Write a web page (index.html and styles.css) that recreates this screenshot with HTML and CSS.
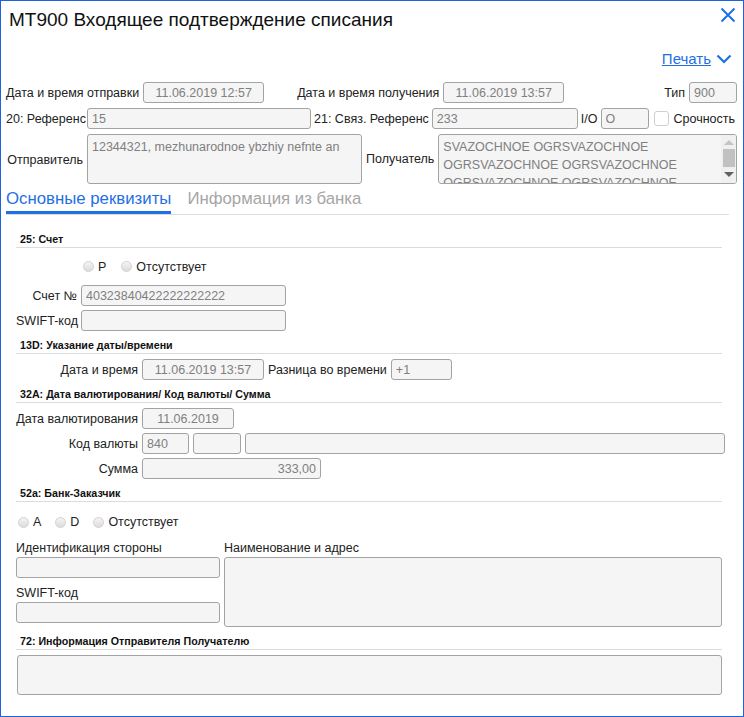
FILE: index.html
```html
<!DOCTYPE html>
<html lang="ru">
<head>
<meta charset="utf-8">
<link rel="stylesheet" href="styles.css">
</head>
<body>
<div class="win">
  <div class="title-bar">
    <h1 class="title">MT900 Входящее подтверждение списания</h1>
    <svg class="close" width="16" height="16" viewBox="0 0 16 16"><path d="M1.5 1.5 L14.5 14.5 M14.5 1.5 L1.5 14.5" stroke="#1f6fe5" stroke-width="2" fill="none"/></svg>
  </div>
  <div class="print-row">
    <a class="print">Печать</a>
    <svg class="chev" width="16" height="10" viewBox="0 0 16 10"><path d="M1.5 1.5 L8 8 L14.5 1.5" stroke="#1f6fe5" stroke-width="2.2" fill="none"/></svg>
  </div>

  <div class="top">
    <div class="row">
      <span class="lbl">Дата и время отправки</span>
      <input class="inp w121 center" readonly value="11.06.2019 12:57">
      <span class="lbl ml27">Дата и время получения</span>
      <input class="inp w121 center" readonly value="11.06.2019 13:57">
      <span class="lbl push">Тип</span>
      <input class="inp w48" readonly value="900">
    </div>
    <div class="row tight">
      <span class="lbl col77">20: Референс</span>
      <input class="inp w224" readonly value="15">
      <span class="lbl">21: Связ. Референс</span>
      <input class="inp w146" readonly value="233">
      <span class="lbl">I/O</span>
      <input class="inp w48" readonly value="O">
      <span class="check"></span>
      <span class="lbl">Срочность</span>
    </div>
    <div class="row tall">
      <span class="lbl col77 low">Отправитель</span>
      <div class="area w275"><div class="area-text">12344321, mezhunarodnoe ybzhiy nefnte an</div></div>
      <span class="lbl">Получатель</span>
      <div class="area grow scroll">
        <div class="area-text">SVAZOCHNOE OGRSVAZOCHNOE OGRSVAZOCHNOE OGRSVAZOCHNOE OGRSVAZOCHNOE OGRSVAZOCHNOE</div>
        <div class="sbar"><span class="up"></span><span class="thumb"></span><span class="down"></span></div>
      </div>
    </div>
  </div>

  <div class="tabs">
    <span class="tab active">Основные реквизиты</span>
    <span class="tab">Информация из банка</span>
  </div>

  <div class="content">
    <div class="sec-h first">25: Счет</div>
    <div class="radios r25">
      <span class="radio"></span><span class="rl">Р</span>
      <span class="radio"></span><span class="rl">Отсутствует</span>
    </div>
    <div class="frow">
      <span class="flbl c60">Счет №</span>
      <input class="inp w205" readonly value="40323840422222222222">
    </div>
    <div class="frow">
      <span class="flbl c60">SWIFT-код</span>
      <input class="inp w205" readonly value="">
    </div>

    <div class="sec-h">13D: Указание даты/времени</div>
    <div class="frow">
      <span class="flbl c121">Дата и время</span>
      <input class="inp w122 center" readonly value="11.06.2019 13:57">
      <span class="flbl">Разница во времени</span>
      <input class="inp w61" readonly value="+1">
    </div>

    <div class="sec-h">32A: Дата валютирования/ Код валюты/ Сумма</div>
    <div class="frow">
      <span class="flbl c121">Дата валютирования</span>
      <input class="inp w92 center" readonly value="11.06.2019">
    </div>
    <div class="frow">
      <span class="flbl c121">Код валюты</span>
      <input class="inp w47" readonly value="840">
      <input class="inp w48" readonly value="">
      <input class="inp grow wide" readonly value="">
    </div>
    <div class="frow">
      <span class="flbl c121">Сумма</span>
      <input class="inp w179 right" readonly value="333,00">
    </div>

    <div class="sec-h">52a: Банк-Заказчик</div>
    <div class="radios r52">
      <span class="radio"></span><span class="rl">A</span>
      <span class="radio"></span><span class="rl">D</span>
      <span class="radio"></span><span class="rl">Отсутствует</span>
    </div>
    <div class="bank">
      <div class="bank-left">
        <div class="slbl">Идентификация стороны</div>
        <input class="inp w204" readonly value="">
        <div class="slbl mt">SWIFT-код</div>
        <input class="inp w204" readonly value="">
      </div>
      <div class="bank-right">
        <div class="slbl">Наименование и адрес</div>
        <div class="area h70"></div>
      </div>
    </div>

    <div class="sec-h">72: Информация Отправителя Получателю</div>
    <div class="area h40 full"></div>
  </div>
</div>
</body>
</html>
```

FILE: styles.css
```css
* { box-sizing: border-box; }
html, body { margin: 0; padding: 0; background: #fff; }
body { font-family: "Liberation Sans", Arial, sans-serif; font-size: 12.5px; color: #222; }

.win {
  width: 744px;
  height: 717px;
  border: 1px solid #1c63dd;
  overflow: hidden;
}

.title-bar {
  display: flex;
  justify-content: space-between;
  align-items: flex-start;
  height: 38px;
  padding: 0 7px 0 8px;
}
.title {
  margin: 0;
  font-weight: normal;
  font-size: 19px;
  line-height: 38px;
  color: #111;
}
.close { margin-top: 6px; }

.print-row {
  display: flex;
  justify-content: flex-end;
  align-items: center;
  height: 38px;
  padding-right: 11px;
  gap: 5px;
}
.print {
  font-size: 15px;
  color: #1f6fe5;
  text-decoration: underline;
}
.chev { margin-top: 2px; }

.top { padding: 5px 6px 0 5px; }
.row {
  display: flex;
  align-items: center;
  gap: 4px;
  height: 21px;
  margin-bottom: 5px;
  white-space: nowrap;
}
.row.tight { gap: 3px; }
.row.tall { height: 50px; margin-bottom: 0; }
.lbl { color: #222; }
.ml27 { margin-left: 29px; }
.push { margin-left: auto; }
.col77 { width: 77px; text-align: right; flex: none; }
.tight .col77 { margin-right: 1px; }
.low { padding-top: 2px; }

.inp {
  flex: none;
  height: 21px;
  border: 1px solid #a3a3a3;
  border-radius: 3px;
  background: #f5f5f5;
  font-family: inherit;
  font-size: 12.5px;
  color: #808080;
  padding: 0 4px;
  margin: 0;
  outline: none;
}
.inp.center { text-align: center; }
.inp.right { text-align: right; }
.w121 { width: 121px; }
.w122 { width: 122px; }
.w48 { width: 48px; }
.w47 { width: 47px; }
.w224 { width: 224px; }
.w146 { width: 146px; }
.w205 { width: 205px; }
.w204 { width: 204px; }
.w61 { width: 61px; }
.w92 { width: 92px; }
.w179 { width: 179px; }
.grow { flex: 1; }

.check {
  width: 15px; height: 15px;
  border: 1px solid #cfcfcf;
  border-radius: 3px;
  background: #fff;
  margin-left: 2px;
  margin-right: 2px;
  flex: none;
}

.area {
  border: 1px solid #a3a3a3;
  border-radius: 3px;
  background: #f5f5f5;
  height: 50px;
  overflow: hidden;
  position: relative;
}
.w275 { width: 275px; flex: none; }
.area-text {
  color: #808080;
  white-space: normal;
  line-height: 18px;
  padding: 3px 4px;
  font-size: 12.5px;
}
.area.scroll .area-text { padding-right: 18px; width: 270px; }
.sbar {
  position: absolute;
  top: 0; right: 0; bottom: 0;
  width: 15px;
  background: #f0f0f0;
  display: flex;
  flex-direction: column;
  align-items: center;
}
.sbar .up {
  margin-top: 5px;
  width: 0; height: 0;
  border-left: 5px solid transparent;
  border-right: 5px solid transparent;
  border-bottom: 5px solid #c4c4c4;
}
.sbar .thumb {
  margin-top: 4px;
  width: 12px; height: 18px;
  background: #c1c1c1;
}
.sbar .down {
  margin-top: auto;
  margin-bottom: 6px;
  width: 0; height: 0;
  border-left: 5px solid transparent;
  border-right: 5px solid transparent;
  border-top: 5px solid #606060;
}

.tabs {
  display: flex;
  gap: 16px;
  margin: 0 14px 0 5px;
  padding-top: 4px;
  border-bottom: 1px solid #dcdcdc;
}
.tab {
  font-size: 16.8px;
  line-height: 22px;
  padding-bottom: 1px;
  border-bottom: 3px solid transparent;
  color: #a6a6a6;
}
.tab.active { color: #1f6fe5; border-bottom-color: #1f6fe5; }

.content { padding: 0 21px 0 15px; }
.sec-h {
  font-weight: bold;
  font-size: 10.7px;
  line-height: 16px;
  height: 17px;
  padding-left: 4px;
  border-bottom: 1px solid #dcdcdc;
  margin-top: 6px;
  margin-bottom: 5px;
  color: #111;
}
.sec-h.first { margin-top: 16px; margin-bottom: 0; }

.radios {
  display: flex;
  align-items: center;
  white-space: nowrap;
}
.r25 { height: 37px; padding-left: 67px; }
.r52 { height: 36px; margin-top: -3px; padding-left: 2px; }
.radio {
  width: 11px; height: 11px;
  border-radius: 50%;
  border: 1px solid #d2d2d2;
  background: linear-gradient(#f4f4f4, #dcdcdc);
  margin-right: 4px;
  flex: none;
}
.rl { margin-right: 15px; }
.r52 .rl { margin-right: 14px; }

.frow {
  display: flex;
  align-items: center;
  gap: 4px;
  height: 21px;
  margin-bottom: 4px;
  white-space: nowrap;
}
.frow:last-of-type { margin-bottom: 0; }
.flbl { color: #222; }
.c60 { width: 61px; text-align: right; flex: none; }
.c121 { width: 122px; text-align: right; flex: none; }
.wide { margin-right: -3px; }

.bank {
  display: flex;
  gap: 4px;
}
.bank-left { width: 204px; flex: none; }
.bank-right { flex: 1; }
.slbl { line-height: 17px; height: 17px; color: #222; }
.slbl.mt { margin-top: 7px; }
.area.h70 { height: 70px; }
.area.h40 { height: 40px; }
.area.full { margin-left: 1px; }
```
